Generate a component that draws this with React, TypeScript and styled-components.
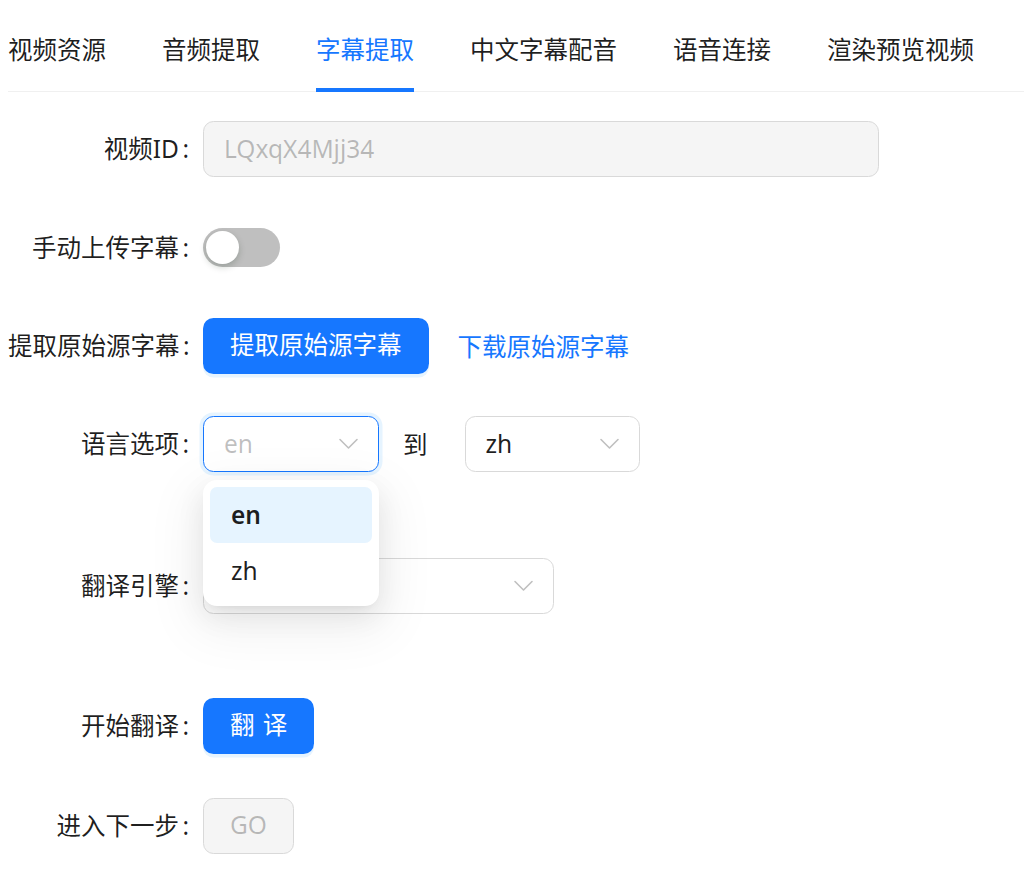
import React from 'react'
import styled, { createGlobalStyle, css } from 'styled-components'

const GlobalStyle = createGlobalStyle`
  html, body {
    margin: 0;
    padding: 0;
    background: #ffffff;
  }
  body {
    font-family: "Noto Sans", "Noto Sans CJK SC", sans-serif;
    font-size: 24.5px;
    color: rgba(0, 0, 0, 0.88);
  }
  * {
    box-sizing: border-box;
  }
`

const Page = styled.div`
  padding: 10px 0 40px 8px;
`

const TabNav = styled.div`
  display: flex;
  gap: 56px;
  border-bottom: 1px solid #f0f0f0;
  margin-bottom: 29px;
`

const Tab = styled.div<{ $active?: boolean }>`
  position: relative;
  padding: 21px 0;
  line-height: 38.5px;
  color: ${({ $active }) => ($active ? '#1677ff' : 'rgba(0, 0, 0, 0.88)')};
  white-space: nowrap;

  ${({ $active }) =>
    $active &&
    css`
      &::after {
        content: '';
        position: absolute;
        left: 0;
        right: 0;
        bottom: -1px;
        height: 3.5px;
        background: #1677ff;
      }
    `}
`

const Form = styled.div`
  display: flex;
  flex-direction: column;
`

const Row = styled.div<{ $gap?: number }>`
  display: flex;
  align-items: center;
  height: 56px;
  margin-bottom: ${({ $gap }) => $gap ?? 42}px;
`

const Label = styled.label`
  width: 195px;
  flex: none;
  text-align: right;
  white-space: nowrap;
  line-height: 56px;

  &::after {
    content: ':';
    margin: 0 14px 0 3.5px;
  }
`

const Control = styled.div`
  display: flex;
  align-items: center;
  position: relative;
`

const Input = styled.div<{ $disabled?: boolean }>`
  width: 676px;
  height: 56px;
  padding: 0 20px;
  display: flex;
  align-items: center;
  border: 1px solid #d9d9d9;
  border-radius: 10.5px;
  background: ${({ $disabled }) => ($disabled ? '#f5f5f5' : '#ffffff')};
  color: ${({ $disabled }) => ($disabled ? 'rgba(0, 0, 0, 0.25)' : 'rgba(0, 0, 0, 0.88)')};
`

const SwitchTrack = styled.button<{ $on?: boolean }>`
  position: relative;
  width: 77px;
  height: 38.5px;
  border: none;
  border-radius: 20px;
  padding: 0;
  background: ${({ $on }) => ($on ? '#1677ff' : '#bfbfbf')};
  cursor: pointer;
`

const SwitchHandle = styled.span<{ $on?: boolean }>`
  position: absolute;
  top: 3px;
  left: ${({ $on }) => ($on ? '41px' : '3px')};
  width: 32.5px;
  height: 32.5px;
  border-radius: 50%;
  background: #ffffff;
  box-shadow: 0 3px 7px 0 rgba(0, 35, 11, 0.2);
`

const Button = styled.button<{ $variant?: 'primary' | 'disabled' }>`
  height: 56px;
  padding: 0 26px;
  border-radius: 10.5px;
  font: inherit;
  line-height: 1;
  white-space: nowrap;
  cursor: pointer;
  border: 1px solid transparent;

  ${({ $variant }) =>
    $variant === 'disabled'
      ? css`
          background: #f5f5f5;
          border-color: #d9d9d9;
          color: rgba(0, 0, 0, 0.25);
          cursor: not-allowed;
        `
      : css`
          background: #1677ff;
          color: #ffffff;
          box-shadow: 0 3.5px 0 rgba(5, 145, 255, 0.1);
        `}
`

const TwoChars = styled.span`
  letter-spacing: 0.34em;
  margin-right: -0.34em;
`

const LinkText = styled.a`
  margin-left: 29px;
  color: #1677ff;
  text-decoration: none;
  white-space: nowrap;
  cursor: pointer;
`

const SelectBox = styled.div<{ $width: number; $focused?: boolean }>`
  width: ${({ $width }) => $width}px;
  height: 56px;
  padding: 0 19px 0 20px;
  display: flex;
  align-items: center;
  justify-content: space-between;
  border: 1px solid ${({ $focused }) => ($focused ? '#1677ff' : '#d9d9d9')};
  border-radius: 10.5px;
  background: #ffffff;
  box-shadow: ${({ $focused }) => ($focused ? '0 0 0 3.5px rgba(5, 145, 255, 0.1)' : 'none')};
`

const SelectValue = styled.span<{ $muted?: boolean }>`
  color: ${({ $muted }) => ($muted ? 'rgba(0, 0, 0, 0.25)' : 'rgba(0, 0, 0, 0.88)')};
`

const Arrow = styled.svg`
  width: 21px;
  height: 21px;
  flex: none;
`

const ToWord = styled.span`
  margin: 0 37px 0 24px;
`

const Dropdown = styled.div`
  position: absolute;
  top: calc(100% + 8px);
  left: 0;
  width: 176px;
  padding: 7px;
  background: #ffffff;
  border-radius: 14px;
  box-shadow: 0 10px 28px 0 rgba(0, 0, 0, 0.08), 0 5px 10px -7px rgba(0, 0, 0, 0.12),
    0 16px 49px 14px rgba(0, 0, 0, 0.05);
  z-index: 10;
`

const Option = styled.div<{ $selected?: boolean }>`
  height: 56px;
  padding: 0 21px;
  display: flex;
  align-items: center;
  border-radius: 7px;
  font-weight: ${({ $selected }) => ($selected ? 600 : 400)};
  background: ${({ $selected }) => ($selected ? '#e6f4ff' : 'transparent')};
`

const DownArrow = () => (
  <Arrow viewBox="0 0 21 21">
    <polyline
      points="2,6.5 10.5,15 19,6.5"
      fill="none"
      stroke="rgba(0,0,0,0.25)"
      strokeWidth="1.6"
      strokeLinejoin="round"
      strokeLinecap="round"
    />
  </Arrow>
)

const Select: React.FC<{ width: number; value?: string; muted?: boolean; focused?: boolean }> = ({
  width,
  value,
  muted,
  focused,
}) => (
  <SelectBox $width={width} $focused={focused}>
    <SelectValue $muted={muted}>{value}</SelectValue>
    <DownArrow />
  </SelectBox>
)

const tabs = ['视频资源', '音频提取', '字幕提取', '中文字幕配音', '语音连接', '渲染预览视频']

export default function App() {
  return (
    <>
      <GlobalStyle />
      <Page>
        <TabNav>
          {tabs.map((t) => (
            <Tab key={t} $active={t === '字幕提取'}>
              {t}
            </Tab>
          ))}
        </TabNav>

        <Form>
          <Row $gap={43}>
            <Label>视频ID</Label>
            <Input $disabled>LQxqX4Mjj34</Input>
          </Row>

          <Row>
            <Label>手动上传字幕</Label>
            <SwitchTrack>
              <SwitchHandle />
            </SwitchTrack>
          </Row>

          <Row>
            <Label>提取原始源字幕</Label>
            <Button $variant="primary">提取原始源字幕</Button>
            <LinkText>下载原始源字幕</LinkText>
          </Row>

          <Row $gap={86}>
            <Label>语言选项</Label>
            <Control>
              <Select width={176} value="en" muted focused />
              <Dropdown>
                <Option $selected>en</Option>
                <Option>zh</Option>
              </Dropdown>
            </Control>
            <ToWord>到</ToWord>
            <Select width={175} value="zh" />
          </Row>

          <Row $gap={84}>
            <Label>翻译引擎</Label>
            <Select width={351} />
          </Row>

          <Row $gap={44}>
            <Label>开始翻译</Label>
            <Button $variant="primary">
              <TwoChars>翻译</TwoChars>
            </Button>
          </Row>

          <Row $gap={0}>
            <Label>进入下一步</Label>
            <Button $variant="disabled">GO</Button>
          </Row>
        </Form>
      </Page>
    </>
  )
}
